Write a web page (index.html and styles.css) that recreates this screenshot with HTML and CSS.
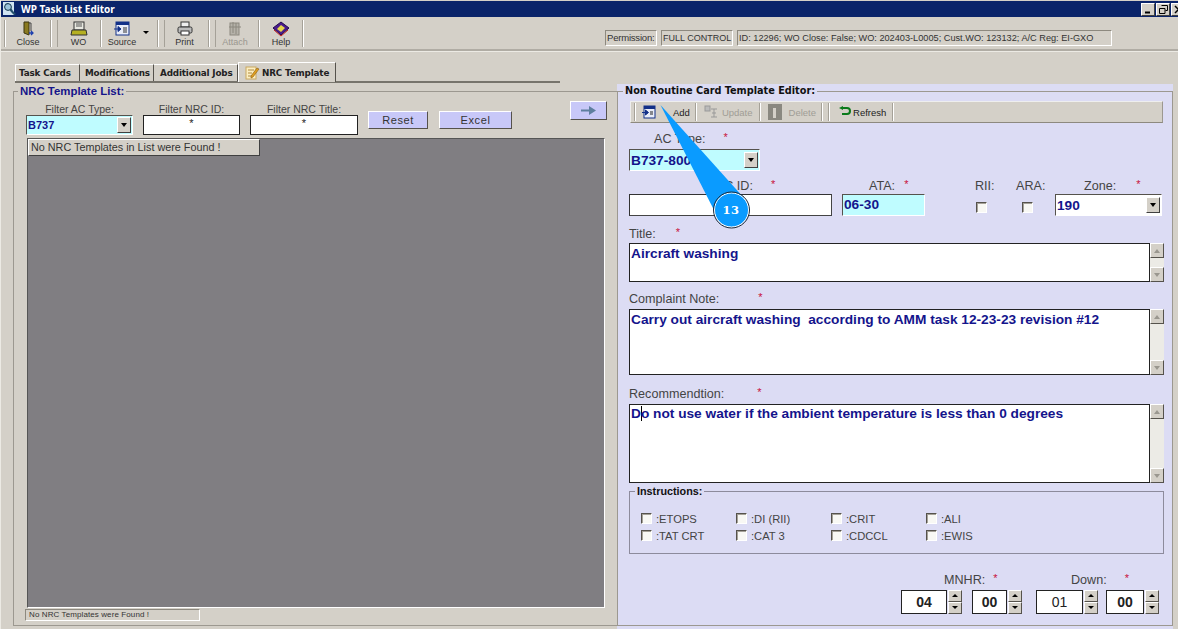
FILE: index.html
```html
<!DOCTYPE html>
<html lang="en">
<head>
<meta charset="utf-8">
<title>WP Task List Editor</title>
<link rel="stylesheet" href="styles.css">
</head>
<body>
<div class="app">
  <header class="titlebar">
    <svg class="appicon" width="16" height="16" viewBox="0 0 16 16"><rect x="1" y="1" width="11" height="13" fill="#cfe3f2"/><path d="M3 3l6 8 3 3 2-1-3-3-5-8z" fill="#23506e"/><circle cx="6" cy="6" r="3.4" fill="#9cc4dc" stroke="#16374f"/></svg>
    <span class="titletext">WP Task List Editor</span>
    <div class="winbtns">
      <span class="winbtn"><svg width="9" height="9" viewBox="0 0 9 9"><path d="M1 7.500h5" stroke="#000" stroke-width="2"/></svg></span>
      <span class="winbtn"><svg width="9" height="9" viewBox="0 0 9 9"><path d="M2.5.5h6v5h-2M.5 3.5h5.500v5h-5.500z" fill="none" stroke="#000"/></svg></span>
      <span class="winbtn"><svg width="9" height="9" viewBox="0 0 9 9"><path d="M1 1l7 7M8 1l-7 7" stroke="#000" stroke-width="1.500"/></svg></span>
    </div>
  </header>

  <nav class="toolbar">
    <span class="sep s1"></span>
    <div class="tool t-close">
      <svg width="16" height="16" viewBox="0 0 16 16"><path d="M4 1h5v13l-5-2z" fill="#8a7a20" stroke="#3a3410"/><path d="M9 2h2v8" fill="none" stroke="#444"/><path d="M9 12h4M11 10l2 2-2 2" fill="none" stroke="#1c3fae" stroke-width="1.300"/></svg>
      <span>Close</span>
    </div>
    <span class="grip"></span>
    <div class="tool t-wo">
      <svg width="18" height="16" viewBox="0 0 18 16"><rect x="4" y="1" width="10" height="8" fill="#e8e8e0" stroke="#333"/><path d="M6 3h6M6 5h6" stroke="#555"/><path d="M2 9h14l1 5H1z" fill="#b5b022" stroke="#333"/></svg>
      <span>WO</span>
    </div>
    <span class="sep"></span>
    <div class="tool t-source">
      <svg width="18" height="16" viewBox="0 0 18 16"><rect x="3" y="1" width="13" height="13" fill="#e8ecf8" stroke="#123088"/><rect x="3" y="1" width="13" height="3" fill="#123088"/><path d="M1 8h6M5 5.500l3 2.500-3 2.500z" fill="#123088" stroke="#123088"/><path d="M10 7h4M10 9h4M10 11h4" stroke="#333"/></svg>
      <span>Source</span>
    </div>
    <span class="caret-down"></span>
    <span class="grip"></span>
    <div class="tool t-print">
      <svg width="18" height="16" viewBox="0 0 18 16"><rect x="5" y="1" width="8" height="5" fill="#eee" stroke="#333"/><rect x="2" y="6" width="14" height="6" rx="1.500" fill="#bbb" stroke="#333"/><rect x="5" y="10" width="8" height="4" fill="#fff" stroke="#333"/></svg>
      <span>Print</span>
    </div>
    <span class="grip"></span>
    <div class="tool t-attach off">
      <svg width="18" height="16" viewBox="0 0 18 16"><rect x="4" y="2" width="9" height="12" fill="#b5b2a9" stroke="#8b887f"/><path d="M7 1v11M10 2v11M3 6h12" stroke="#8b887f"/></svg>
      <span>Attach</span>
    </div>
    <span class="sep"></span>
    <div class="tool t-help">
      <svg width="18" height="16" viewBox="0 0 18 16"><path d="M1 7l8-6 8 6-8 7z" fill="#4a1c8c" stroke="#220a50"/><path d="M5 8l4-4 4 3-4 4z" fill="#e6d84a"/><path d="M2 9l7 6 7-6" fill="none" stroke="#c02020"/></svg>
      <span>Help</span>
    </div>
    <span class="sep"></span>
    <div class="statuses">
      <span class="st st-perm">Permission:</span>
      <span class="st st-full">FULL CONTROL</span>
      <span class="st st-info">ID: 12296; WO Close: False; WO: 202403-L0005; Cust.WO: 123132; A/C Reg: EI-GXO</span>
    </div>
  </nav>

  <div class="tabs">
    <span class="tab tab-1">Task Cards</span>
    <span class="tab tab-2">Modifications</span>
    <span class="tab tab-3">Additional Jobs</span>
    <span class="tab tab-on">
      <svg width="15" height="15" viewBox="0 0 15 15"><rect x="1" y="2" width="10" height="12" fill="#fbeec2" stroke="#c9a860"/><path d="M3 5h6M3 8h4M3 11h4" stroke="#b08a40"/><path d="M6 11l6-8 2 1-6 8-2 1z" fill="#e0a020" stroke="#8a5a10" stroke-width=".6"/></svg>
      NRC Template
    </span>
  </div>

  <main class="main">
    <section class="leftcol">
      <fieldset class="group listgroup">
        <legend class="legend-blue">NRC Template List:</legend>
        <div class="filters">
          <div class="filter f-type">
            <label class="flabel">Filter AC Type:</label>
            <div class="combo combo-cyan combo-f"><span class="val">B737</span><span class="drop"><i></i></span></div>
          </div>
          <div class="filter f-id">
            <label class="flabel">Filter NRC ID:</label>
            <div class="finput">*</div>
          </div>
          <div class="filter f-title">
            <label class="flabel">Filter NRC Title:</label>
            <div class="finput">*</div>
          </div>
          <button class="pbtn b-reset">Reset</button>
          <button class="pbtn b-excel">Excel</button>
          <button class="pbtn b-arrow" aria-label="Move">
            <svg width="16" height="9" viewBox="0 0 16 9"><path d="M0 3.500h8V0l7 4.500-7 4.500V5.500H0z" fill="#5f7f9f"/></svg>
          </button>
        </div>
        <div class="grid">
          <div class="gridhead">No NRC Templates in List were Found !</div>
        </div>
        <div class="gridstatus">No NRC Templates were Found !</div>
      </fieldset>
    </section>

    <section class="rightcol">
      <fieldset class="group editor">
        <legend class="legend-black">Non Routine Card Template Editor:</legend>
        <div class="edbar">
          <span class="sep bs1"></span>
          <svg class="bi bi-add" width="14" height="14" viewBox="0 0 14 14"><rect x="2" y="1" width="11" height="12" fill="#e8ecf8" stroke="#123088"/><rect x="2" y="1" width="11" height="3" fill="#123088"/><path d="M0 7.500h5M3.500 5l3 2.500-3 2.500z" fill="#123088" stroke="#123088"/><path d="M8 7h3M8 9h3" stroke="#222"/></svg>
          <span class="bt bt-add">Add</span>
          <span class="sep bs2"></span>
          <svg class="bi" width="15" height="14" viewBox="0 0 15 14"><rect x="1" y="1" width="5" height="5" fill="#bbb" stroke="#999"/><path d="M7 4h6M10 4v8M7 12h6M8 8h4" stroke="#999"/></svg>
          <span class="bt off">Update</span>
          <span class="sep bs3"></span>
          <svg class="bi bi-del" width="14" height="16" viewBox="0 0 14 16"><rect width="14" height="16" fill="#8a8880"/><rect x="5" y="4" width="3" height="10" fill="#d4d0c8"/></svg>
          <span class="bt off">Delete</span>
          <span class="sep bs4"></span>
          <span class="sep bs5"></span>
          <svg class="bi bi-ref" width="13" height="12" viewBox="0 0 13 12"><path d="M4 2h5a3 3 0 0 1 0 6H4" fill="none" stroke="#0a7a1a" stroke-width="2"/><path d="M5 0v4L1 2zM5 6v4" fill="#0a7a1a"/></svg>
          <span class="bt bt-ref">Refresh</span>
          <span class="sep bs6"></span>
        </div>

        <div class="lab lab-ac"><span>AC Type:</span><b>*</b></div>
        <div class="combo combo-cyan combo-ac"><span class="val">B737-800</span><span class="drop"><i></i></span></div>

        <div class="row-id">
          <div class="col c-id">
            <div class="lab lab-id"><span>NRC ID:</span><b>*</b></div>
            <div class="tinput"></div>
          </div>
          <div class="col c-ata">
            <div class="lab lab-ata"><span>ATA:</span><b>*</b></div>
            <div class="tinput cyan val">06-30</div>
          </div>
          <div class="col c-rii">
            <div class="lab"><span>RII:</span></div>
            <span class="chk"></span>
          </div>
          <div class="col c-ara">
            <div class="lab"><span>ARA:</span></div>
            <span class="chk"></span>
          </div>
          <div class="col c-zone">
            <div class="lab lab-zone"><span>Zone:</span><b>*</b></div>
            <div class="combo combo-zone"><span class="val">190</span><span class="drop"><i></i></span></div>
          </div>
        </div>

        <div class="lab lab-title"><span>Title:</span><b>*</b></div>
        <div class="memo m-title">
          <div class="memotext">Aircraft washing</div>
          <div class="sb"><span class="sbb"><i class="up"></i></span><span class="sbt"></span><span class="sbb"><i class="dn"></i></span></div>
        </div>

        <div class="lab lab-note"><span>Complaint Note:</span><b>*</b></div>
        <div class="memo m-note">
          <div class="memotext">Carry out aircraft washing  according to AMM task 12-23-23 revision #12</div>
          <div class="sb"><span class="sbb"><i class="up"></i></span><span class="sbt"></span><span class="sbb"><i class="dn"></i></span></div>
        </div>

        <div class="lab lab-rec"><span>Recommendtion:</span><b>*</b></div>
        <div class="memo m-rec">
          <div class="memotext"><span class="cursor">D</span>o not use water if the ambient temperature is less than 0 degrees</div>
          <div class="sb"><span class="sbb"><i class="up"></i></span><span class="sbt"></span><span class="sbb"><i class="dn"></i></span></div>
        </div>

        <fieldset class="group instr">
          <legend class="legend-small">Instructions:</legend>
          <div class="instgrid">
            <label class="ck"><span class="chk"></span>:ETOPS</label>
            <label class="ck"><span class="chk"></span>:DI (RII)</label>
            <label class="ck"><span class="chk"></span>:CRIT</label>
            <label class="ck"><span class="chk"></span>:ALI</label>
            <label class="ck"><span class="chk"></span>:TAT CRT</label>
            <label class="ck"><span class="chk"></span>:CAT 3</label>
            <label class="ck"><span class="chk"></span>:CDCCL</label>
            <label class="ck"><span class="chk"></span>:EWIS</label>
          </div>
        </fieldset>

        <div class="hours">
          <div class="hcol h-mn">
            <div class="lab lab-mn"><span>MNHR:</span><b>*</b></div>
            <div class="spins">
              <div class="spin w46"><span class="sv">04</span><span class="sa"><i class="su"></i><i class="sd"></i></span></div>
              <div class="spin w37"><span class="sv">00</span><span class="sa"><i class="su"></i><i class="sd"></i></span></div>
            </div>
          </div>
          <div class="hcol h-dn">
            <div class="lab lab-dn"><span>Down:</span><b>*</b></div>
            <div class="spins">
              <div class="spin w47 light"><span class="sv">01</span><span class="sa"><i class="su"></i><i class="sd"></i></span></div>
              <div class="spin w39"><span class="sv">00</span><span class="sa"><i class="su"></i><i class="sd"></i></span></div>
            </div>
          </div>
        </div>
      </fieldset>
    </section>
  </main>

  <div class="callout">
    <svg width="100" height="136" viewBox="0 0 100 136"><path d="M1.500 5L85 98 57 114z" fill="#0a9bff"/><circle cx="72.500" cy="110" r="17" fill="#0a9bff" stroke="#fff" stroke-width="1"/><circle cx="72.500" cy="110" r="18" fill="none" stroke="#1a2a3a" stroke-width="1"/></svg>
    <span class="callnum">13</span>
  </div>
</div>
</body>
</html>
```

FILE: styles.css
```css
* { box-sizing: border-box; }
html, body { margin: 0; padding: 0; }
body {
  width: 1178px;
  height: 629px;
  overflow: hidden;
  background: #d4d0c8;
  font-family: "Liberation Sans", Arial, sans-serif;
  color: #222;
}
.app { position: relative; width: 1178px; height: 629px; display: flex; flex-direction: column; border-left: 1px solid #eceae4; overflow: hidden; }

/* title bar */
.titlebar { height: 16px; margin-top: 1px; background: #0a246a; display: flex; align-items: center; flex: none; }
.appicon { margin-left: 1px; flex: none; }
.titletext { margin-left: 3px; color: #fff; font: bold 10px "Noto Sans", sans-serif; }
.winbtns { margin-left: auto; display: flex; gap: 0; margin-right: -8px; flex: none; }
.winbtn { flex: none; width: 14px; height: 13px; margin-right: 1px; background: #d4d0c8; border: 1px solid; border-color: #fff #404040 #404040 #fff; display: flex; align-items: center; justify-content: center; }

/* toolbar */
.toolbar { height: 34px; flex: none; display: flex; align-items: stretch; border-bottom: 2px solid #b0aca4; box-shadow: 0 1px 0 #eceae4; padding-top: 3px; }
.tool { flex: none; display: flex; flex-direction: column; align-items: center; font-size: 9px; color: #333; justify-content: flex-start; gap: 0; line-height: 11px; padding-top: 1px; }
.tool.off { color: #9a978f; }
.sep, .grip { display: block; flex: none; width: 2px; height: 27px; border-left: 1px solid #a5a198; border-right: 1px solid #fff; }
.grip { width: 8px; border-right: 1px solid #a5a198; box-shadow: inset 1px 0 0 #fff; }
.s1 { margin-left: 3px; }
.t-close { width: 44px; }
.t-wo { width: 41px; margin-right: 1px; }
.t-source { width: 40px; }
.caret-down { flex: none; width: 6px; height: 0; border: 3px solid transparent; border-top: 3px solid #000; border-bottom: 0; margin: 11px 8px 0 1px; }
.t-print { width: 39px; margin-right: 4px; }
.t-attach { width: 38px; margin-right: 4px; }
.t-help { width: 42px; }
.statuses { display: flex; gap: 4px; margin-left: 301px; margin-top: 10px; height: 16px; flex: none; }
.st { border: 1px solid; border-color: #8d897f #fff #fff #8d897f; font-size: 9.500px; line-height: 14px; padding-left: 1px; color: #333; white-space: nowrap; }
.st-perm { width: 52px; letter-spacing: -.2px; }
.st-full { width: 72px; font-size: 9px; }
.st-info { width: 375px; font-size: 9.200px; }

/* tabs */
.tabs { flex: none; margin: 9px 0 1px 14px; width: 545px; height: 23px; display: flex; align-items: flex-end; border-bottom: 2px solid #77746c; }
.tab { flex: none; height: 17px; font: bold 8.800px/16px "DejaVu Sans", sans-serif; color: #222; border-right: 1px solid #55524c; border-top: 1px solid #fff; padding: 0 3px; white-space: nowrap; letter-spacing: -.15px; }
.tab-1 { width: 65px; padding-left: 3px; border-left: 1px solid #fff; }
.tab-2 { width: 74px; padding-left: 5px; }
.tab-3 { width: 84px; padding-left: 6px; }
.tab-on { height: 20px; width: 98px; display: flex; align-items: center; gap: 2px; border-left: 1px solid #fff; margin-bottom: -1px; background: #d4d0c8; padding-left: 6px; }
.tab-on svg { flex: none; }

/* main */
.main { flex: 1; display: flex; min-height: 0; }
.leftcol { width: 616px; padding: 0 0 3px 12px; flex: none; display: flex; }
.rightcol { width: 556px; flex: none; background: #dcdcf4; padding-bottom: 3px; display: flex; }
.group { margin: 0; padding: 0; border: 1px solid #9c9890; min-width: 0; }
.listgroup { width: 100%; border-right: 0; padding-left: 12px; position: relative; }
.editor { width: 100%; padding-left: 11px; margin-top: 0; }
.legend-blue { margin-left: -8px; padding: 0 2px; font: bold 11.400px/14px "Liberation Sans", sans-serif; color: #14148a; }
.legend-black { margin-left: -6px; padding: 0 2px; font: bold 10.800px/14px "DejaVu Sans Condensed", "Liberation Sans", sans-serif; color: #111; }
.legend-small { margin-left: 5px; padding: 0 2px; font: bold 10.800px/12px "Liberation Sans", sans-serif; color: #111; }

/* filters */
.filters { height: 40px; display: flex; align-items: flex-start; position: relative; }
.filter { display: flex; flex-direction: column; flex: none; }
.flabel { text-align: center; font-size: 10.500px; line-height: 12px; height: 17px; padding-top: 5px; color: #444; }
.f-type { width: 107px; }
.f-id { width: 97px; margin-left: 10px; }
.f-title { width: 108px; margin-left: 10px; }
.finput { height: 20px; background: #fff; border: 1px solid #222; text-align: center; font-size: 11px; line-height: 14px; }
.pbtn { flex: none; padding: 0; background: #c8c8f8; border: 1px solid; border-color: #fff #55524c #55524c #fff; font: 11px "Liberation Sans", sans-serif; letter-spacing: .6px; color: #333; }
.b-reset { width: 60px; height: 18px; margin: 13px 0 0 10px; }
.b-excel { width: 73px; height: 18px; margin: 13px 0 0 11px; }
.b-arrow { width: 37px; height: 19px; margin: 3px 0 0 58px; display: flex; align-items: center; justify-content: center; }

.combo { display: flex; align-items: center; height: 20px; border: 1px solid; border-color: #55524c #fff #fff #55524c; background: #fff; position: relative; }
.combo-cyan { background: #bffcff; }
.combo .val { flex: 1; padding-left: 1px; }
.val { font: bold 13.700px "Liberation Sans", sans-serif; color: #14148c; }
.combo-f .val { font-size: 11px; }
.drop { width: 14px; height: 16px; margin-right: 1px; background: #d4d0c8; border: 1px solid; border-color: #fff #404040 #404040 #fff; display: flex; align-items: center; justify-content: center; }
.drop i { width: 0; height: 0; border: 3px solid transparent; border-top: 4px solid #000; border-bottom: 0; }

.grid { width: 578px; height: 470px; margin-left: 1px; background: #807e82; border: 1px solid; border-color: #555 #fff #fff #555; }
.gridhead { width: 232px; height: 17px; background: #d4d0c8; border: 1px solid; border-color: #fff #404040 #404040 #fff; font-size: 10.800px; line-height: 15px; padding-left: 2px; color: #333; }
.gridstatus { width: 175px; height: 12px; margin: 1px 0 0 -1px; border: 1px solid; border-color: #8d897f #fff #fff #8d897f; font-size: 8px; line-height: 10px; padding-left: 3px; letter-spacing: .1px; color: #333; }

/* editor */
.edbar { width: 533px; height: 22px; margin: 3px 0 0 1px; display: flex; align-items: center; background: #d4d0c8; border: 1px solid; border-color: #eee #9c9890 #8d897f #eee; }
.edbar .sep { height: 18px; }
.bs1 { margin-left: 3px; }
.bi { flex: none; }
.bi-add { margin-left: 6px; }
.bt { font-size: 9.500px; color: #222; }
.bt.off { color: #a09d96; }
.bt-add { margin-left: 17px; margin-right: 5px; }
.bs2 { margin-right: 7px; }
.bs2 + .bi { margin-right: 3px; }
.bs3 { margin: 0 7px 0 6px; }
.bi-del { margin-right: 7px; }
.bs4 { margin-left: 5px; }
.bs5 { margin: 0 8px 0 5px; }
.bi-ref { margin-right: 2px; }
.bs6 { margin-left: 6px; }

.lab { font-size: 12.600px; line-height: 14px; color: #444; height: 14px; white-space: nowrap; }
.lab b { font-weight: normal; color: #c8103c; font-size: 11px; position: relative; top: -2px; }
.lab-ac { margin: 9px 0 0 25px; }
.lab-ac b { margin-left: 18px; }
.combo-ac { width: 131px; height: 22px; margin-top: 3px; }
.combo-ac .val { padding-left: 1px; }
.row-id { display: flex; height: 37px; margin-top: 8px; align-items: flex-start; }
.col { display: flex; flex-direction: column; }
.c-id { width: 203px; }
.c-ata { width: 83px; margin-left: 10px; }
.c-rii { width: 28px; margin-left: 50px; align-items: flex-start; }
.c-ara { width: 32px; margin-left: 13px; }
.c-zone { width: 107px; margin-left: 7px; }
.tinput { height: 22px; margin-top: 1px; background: #fff; border: 1px solid; border-color: #333 #444 #444 #333; line-height: 20px; padding-left: 1px; }
.tinput.cyan { background: #bffcff; border-color: #55524c #fff #fff #55524c; }
.lab-id { text-align: left; padding-left: 77px; }
.lab-id b { margin-left: 18px; }
.lab-ata { padding-left: 27px; }
.lab-ata b { margin-left: 9px; }
.lab-zone { padding-left: 29px; }
.lab-zone b { margin-left: 20px; }
.combo-zone { height: 22px; margin-top: 1px; }
.chk { display: block; flex: none; width: 11px; height: 11px; background: #f8f8f4; border: 1px solid; border-color: #55524c #fff #fff #55524c; box-shadow: inset 1px 1px 0 #a5a198; }
.c-rii .chk { margin: 9px 0 0 1px; }
.c-ara .chk { margin: 9px 0 0 6px; }

.lab-title { margin-top: 11px; }
.lab-title b { margin-left: 20px; }
.lab-note { margin-top: 10px; }
.lab-note b { margin-left: 39px; }
.lab-rec { margin-top: 12px; }
.lab-rec b { margin-left: 33px; }
.memo { display: flex; width: 535px; margin-top: 3px; }
.m-title { height: 39px; margin-top: 2px; }
.m-note { height: 66px; }
.m-rec { height: 79px; }
.memotext { width: 521px; background: #fff; border: 1px solid #222; font: bold 13.700px/18px "Liberation Sans", sans-serif; color: #14148c; padding: 0 0 0 1px; white-space: pre; }
.m-title .memotext, .m-note .memotext { padding-top: 1px; }
.cursor { box-shadow: 1px 0 0 #000; }
.sb { width: 14px; display: flex; flex-direction: column; background: #ecebe6; }
.sbb { height: 15px; flex: none; background: #d4d0c8; border: 1px solid; border-color: #fff #55524c #55524c #fff; display: flex; align-items: center; justify-content: center; }
.sbt { flex: 1; }
.sbb i { width: 0; height: 0; border: 3.500px solid transparent; }
.sbb .up { border-bottom: 4px solid #9a978f; border-top: 0; }
.sbb .dn { border-top: 4px solid #9a978f; border-bottom: 0; }

.instr { width: 535px; height: 69px; margin-top: 2px; border-color: #8d8b9c; padding: 0; }
.instgrid { display: grid; grid-template-columns: repeat(4, 95px); grid-auto-rows: 17px; padding: 13px 0 0 11px; }
.ck { display: flex; align-items: center; gap: 4px; font-size: 11.200px; color: #444; white-space: nowrap; }

.hours { display: flex; justify-content: flex-end; gap: 14px; width: 530px; margin-top: 19px; }
.lab-mn { padding-left: 43px; }
.lab-mn b { margin-left: 8px; }
.lab-dn { padding-left: 35px; }
.lab-dn b { margin-left: 18px; }
.hcol { display: flex; flex-direction: column; }
.spins { display: flex; gap: 10px; margin-top: 3px; }
.h-dn .spins { gap: 8px; }
.spin { display: flex; height: 24px; flex: none; }
.sv { flex: 1; background: #fff; border: 1px solid #222; text-align: center; font: bold 14px/22px "Liberation Sans", sans-serif; color: #222; }
.sa { width: 14px; margin-left: 1px; display: flex; flex-direction: column; }
.sa i { flex: 1; background: #d4d0c8; border: 1px solid; border-color: #fff #55524c #55524c #fff; position: relative; }
.su::after, .sd::after { content: ""; position: absolute; left: 3px; top: 3px; width: 0; height: 0; border: 3px solid transparent; }
.su::after { border-bottom: 3px solid #000; border-top: 0; }
.sd::after { border-top: 3px solid #000; border-bottom: 0; }
.w46 { width: 61px; }
.w37 { width: 50px; }
.w47 { width: 62px; }
.w39 { width: 53px; }
.light .sv { font-weight: normal; }

/* callout over the form */
.callout { position: absolute; left: 658px; top: 100px; width: 100px; height: 136px; }
.callout svg { display: block; }
.callnum { position: absolute; left: 52px; top: 102px; width: 40px; text-align: center; color: #fff; font: bold 11.500px/16px "DejaVu Serif", serif; letter-spacing: .5px; }
```
